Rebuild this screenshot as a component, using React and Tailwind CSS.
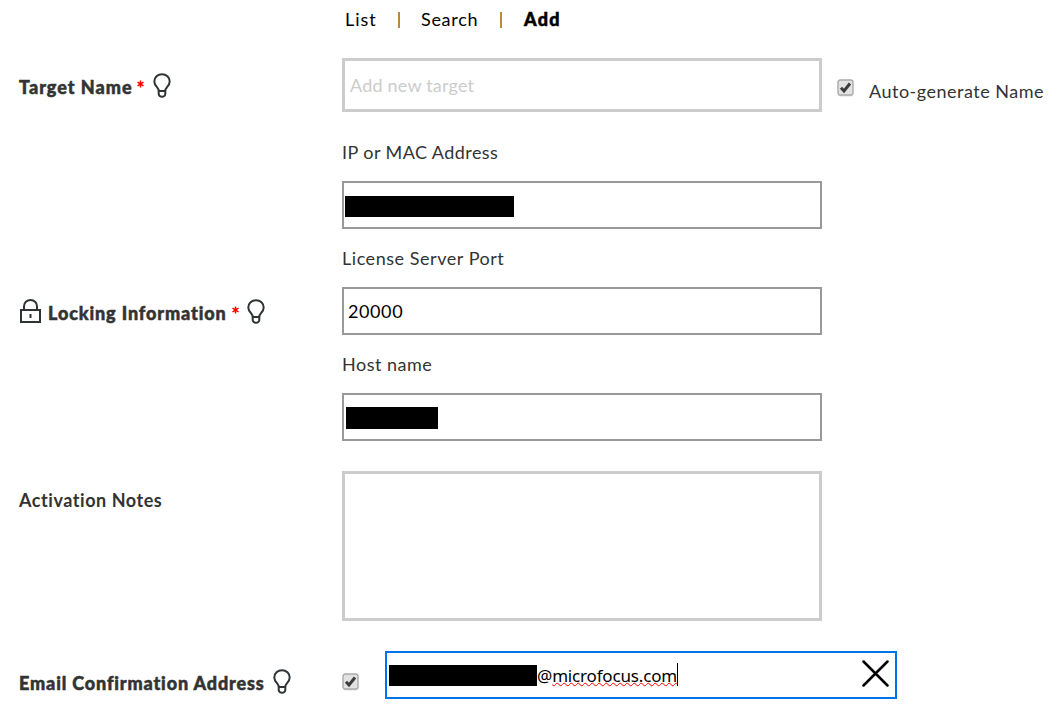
import React from "react";

function Bulb({ className }) {
  return (
    <svg className={className} width="18" height="25" viewBox="0 0 18 25" fill="none" stroke="#2f3437" strokeWidth="2">
      <path d="M6 18.2C6 14.8 1.3 13.2 1.3 8.5C1.3 4.2 4.7 1.2 9 1.2S16.700 4.200 16.700 8.500C16.700 13.200 12 14.800 12 18.200" />
      <path d="M5.700 18H12.300V21A3.300 2.800 0 0 1 5.700 21Z" />
    </svg>
  );
}

function Lock() {
  return (
    <svg width="21" height="24" viewBox="0 0 21 24" className="shrink-0" fill="none" stroke="#2f3437" strokeWidth="2">
      <path d="M1 11H20V23H1Z" />
      <path d="M4 11V7.200A6.500 6.200 0 0 1 17 7.200V11" />
      <path d="M10.500 15V19" />
    </svg>
  );
}

function Star({ className }) {
  return (
    <svg className={className} width="7" height="8" viewBox="0 0 7 8" stroke="#ff0000" strokeWidth="1.5">
      <path d="M3.500 0.500V7.500M0.500 2.200L6.500 5.800M6.500 2.200L0.500 5.800" />
    </svg>
  );
}

function Checkbox({ className }) {
  return (
    <span role="checkbox" aria-checked="true" className={className}>
      <svg width="17" height="18" viewBox="0 0 17 18" fill="none">
        <rect x="1" y="2" width="15" height="15.500" rx="2.500" fill="#dddddd" />
        <rect x="1" y="1" width="15" height="15" rx="2.200" fill="#e2e2e2" stroke="#aaaaaa" strokeWidth="1.400" />
        <path d="M4 8.800L7 12L13 4.500" stroke="#3c3c3c" strokeWidth="3" />
      </svg>
    </span>
  );
}

const text = "whitespace-nowrap text-[18px] leading-[20px] [font-variant-ligatures:none]";
const heavy = "font-black [-webkit-text-stroke:0.5px]";

function Field({ label, labelClass, children }) {
  return (
    <div className="flex h-[106px] flex-col">
      <div className={`${text} h-[39px] ${labelClass}`}>{label}</div>
      <div className="flex h-[48px] w-[480px] border-2 border-[#999999]">{children}</div>
    </div>
  );
}

export default function App() {
  return (
    <main className="h-[708px] w-[1059px] overflow-hidden bg-white text-[#333333] [font-family:Lato,sans-serif]">
      <nav className={`${text} flex h-[58px] pt-[9px] pl-[345px] text-black`}>
        <span className="w-[53px] tracking-[1px]">List</span>
        <span className="mt-[3px] h-[16px] w-[23px] border-l-2 border-[#b98a3a]" />
        <span className="w-[79px] tracking-[0.7px]">Search</span>
        <span className="mt-[3px] h-[16px] w-[24px] border-l-2 border-[#b98a3a]" />
        <span className={`${heavy} tracking-[1.2px]`}>Add</span>
      </nav>

      <section className="flex h-[84px]">
        <div className="flex w-[342px] pl-[19px]">
          <span className={`${text} ${heavy} w-[118px] pt-[19px] tracking-[1px]`}>Target Name</span>
          <Star className="mt-[22px]" />
          <Bulb className="mt-[15px] ml-[9px]" />
        </div>
        <div className="flex h-[54px] w-[480px] border-3 border-[#cccccc] pt-[14px] pl-[5px]">
          <span className={`${text} tracking-[0.2px] text-[#cccccc]`}>Add new target</span>
        </div>
        <Checkbox className="mt-[21px] ml-[15px] w-[32px]" />
        <span className={`${text} pt-[23px] tracking-[0.5px]`}>Auto-generate Name</span>
      </section>

      <section className="flex h-[329px]">
        <div className="flex w-[342px] pt-[157px] pl-[20px]">
          <Lock />
          <span className={`${text} ${heavy} ml-[7px] w-[184px] pt-[4px] tracking-[0.88px]`}>Locking Information</span>
          <Star className="mt-[7px]" />
          <Bulb className="ml-[8px]" />
        </div>
        <div className="flex flex-col">
          <Field label="IP or MAC Address" labelClass="tracking-[0.43px]">
            <span className="mt-[13px] ml-px h-[21px] w-[169px] bg-black" />
          </Field>
          <Field label="License Server Port" labelClass="tracking-[0.54px]">
            <span className={`${text} pt-[12px] pl-[4px] tracking-[0.6px] text-black`}>20000</span>
          </Field>
          <Field label="Host name" labelClass="tracking-[0.5px]">
            <span className="mt-[12px] ml-[2px] h-[22px] w-[92px] bg-black" />
          </Field>
        </div>
      </section>

      <section className="flex h-[180px]">
        <span className={`${text} w-[342px] pt-[19px] pl-[19px] font-bold tracking-[0.55px]`}>Activation Notes</span>
        <div className="h-[150px] w-[480px] border-3 border-[#cccccc]" />
      </section>

      <section className="flex h-[57px]">
        <div className="flex w-[342px] pl-[19px]">
          <span className={`${text} ${heavy} w-[254px] pt-[22px] tracking-[0.86px]`}>Email Confirmation Address</span>
          <Bulb className="mt-[18px]" />
        </div>
        <Checkbox className="mt-[22px] w-[43px]" />
        <div className="flex h-[48px] w-[512px] border-2 border-[#0073e7] pl-[2px]">
          <span className="mt-[12px] h-[21px] w-[148px] bg-black" />
          <span className="pt-[13px] text-[17px] leading-[20px] tracking-[-0.17px] whitespace-nowrap text-black [font-family:'Noto_Sans',sans-serif]">
            @<span className="underline decoration-[#ff0000] decoration-wavy decoration-[1.3px] [text-underline-offset:0px]">microfocus.com</span>
          </span>
          <span className="mt-[10px] h-[23px] w-px bg-black" />
          <svg className="mt-[7px] mr-[6px] ml-auto" width="27" height="27" viewBox="0 0 27 27" stroke="#000000" strokeWidth="2.500" strokeLinecap="round">
            <path d="M1.500 1.500L25.500 25.500M25.500 1.500L1.500 25.500" />
          </svg>
        </div>
      </section>
    </main>
  );
}
